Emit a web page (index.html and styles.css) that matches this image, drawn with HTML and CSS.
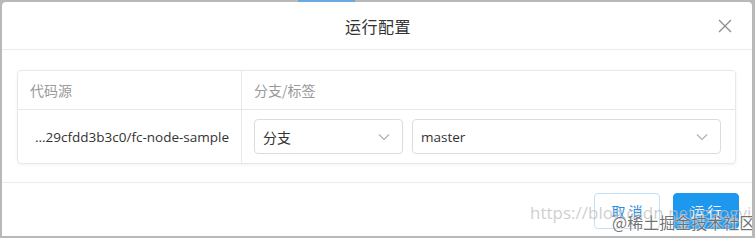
FILE: index.html
```html
<!DOCTYPE html>
<html lang="zh">
<head>
<meta charset="utf-8">
<title>运行配置</title>
<link rel="stylesheet" href="styles.css">
</head>
<body>
<div class="topstrip"><span class="tabline"></span></div>
<div class="modal">
  <div class="header">
    <div class="title">运行配置</div>
    <span class="close" aria-label="close">
      <svg width="14" height="14" viewBox="0 0 14 14"><path d="M1 1L13 13M13 1L1 13" stroke="#8c8c8c" stroke-width="1.3" fill="none"/></svg>
    </span>
  </div>
  <div class="body">
    <div class="table">
      <div class="row head">
        <div class="cell c1">代码源</div>
        <div class="cell c2">分支/标签</div>
      </div>
      <div class="row data">
        <div class="cell c1 src">...29cfdd3b3c0/fc-node-sample</div>
        <div class="cell c2 selects">
          <div class="select s1"><span>分支</span><svg class="chev" width="12" height="8" viewBox="0 0 12 8"><path d="M1 1.5L6 6.5L11 1.5" stroke="#b0b0b0" stroke-width="1.2" fill="none"/></svg></div>
          <div class="select s2"><span>master</span><svg class="chev" width="12" height="8" viewBox="0 0 12 8"><path d="M1 1.5L6 6.5L11 1.5" stroke="#b0b0b0" stroke-width="1.2" fill="none"/></svg></div>
        </div>
      </div>
    </div>
  </div>
  <div class="footer">
    <button class="btn cancel">取 消</button>
    <button class="btn primary">运 行</button>
  </div>
  <div class="wm">
    <span class="wm1">https://blog.csdn.net/gaogyike</span>
    <span class="wm2">@稀土掘金技术社区</span>
  </div>
</div>
</body>
</html>
```

FILE: styles.css
```css
html, body {
  margin: 0;
  padding: 0;
}
body {
  width: 755px;
  height: 238px;
  background: #b9b9b9;
  font-family: "Noto Sans CJK SC", "Open Sans", sans-serif;
  overflow: hidden;
  position: relative;
}
.topstrip {
  height: 2px;
  display: flex;
}
.tabline {
  margin-left: 298px;
  width: 57px;
  height: 2px;
  background: #6aa8e0;
}
.modal {
  position: relative;
  margin: 0 3px 2px 2px;
  height: 234px;
  background: #fff;
  border-radius: 4px 4px 0 0;
  overflow: hidden;
  display: flex;
  flex-direction: column;
}
.header {
  height: 47px;
  border-bottom: 1px solid #ececec;
  display: flex;
  align-items: center;
  justify-content: center;
  position: relative;
}
.title {
  font-size: 16px;
  color: #333;
  letter-spacing: 0.5px;
  margin-left: 2px;
}
.close {
  position: absolute;
  right: 20px;
  top: 17px;
  width: 14px;
  height: 14px;
  display: flex;
}
.body {
  padding: 20px 16px 18px 15px;
  border-bottom: 1px solid #ececec;
}
.table {
  border: 1px solid #e8e8e8;
  border-radius: 4px;
  box-shadow: 0 1px 3px rgba(0,0,0,0.06);
}
.row {
  display: flex;
}
.row.head {
  height: 38px;
  border-bottom: 1px solid #e8e8e8;
}
.row.data {
  height: 53px;
}
.cell {
  display: flex;
  align-items: center;
  box-sizing: border-box;
}
.c1 {
  width: 224px;
  border-right: 1px solid #e8e8e8;
  padding: 0 12px;
}
.c2 {
  flex: 1;
  padding: 0 14px 0 12px;
}
.head .cell {
  font-size: 14px;
  color: #999;
}
.src {
  justify-content: flex-end;
  font-family: "Open Sans", "Noto Sans CJK SC", sans-serif;
  font-size: 13.5px;
  color: #333;
  white-space: nowrap;
  overflow: hidden;
}
.selects {
  gap: 9px;
}
.select {
  height: 35px;
  box-sizing: border-box;
  border: 1px solid #dcdcdc;
  border-radius: 4px;
  display: flex;
  align-items: center;
  justify-content: space-between;
  padding: 0 12px 0 8px;
  font-size: 14px;
  color: #333;
}
.s1 {
  width: 149px;
}
.s2 {
  flex: 1;
}
.s2 span {
  font-family: "Open Sans", "Noto Sans CJK SC", sans-serif;
  font-size: 13.5px;
}
.footer {
  display: flex;
  justify-content: flex-end;
  gap: 13px;
  padding: 10px 13px 0 0;
}
.btn {
  height: 36px;
  width: 66px;
  border-radius: 4px;
  font-family: "Noto Sans CJK SC", sans-serif;
  font-size: 14px;
  cursor: pointer;
  padding: 0;
}
.cancel {
  background: #fff;
  border: 1px solid #bfe0f7;
  color: #2a8ee0;
}
.primary {
  background: #1e97ee;
  border: 1px solid #1e97ee;
  color: #fff;
}
.wm {
  position: absolute;
  left: 528px;
  top: 199px;
  width: 230px;
  height: 40px;
  pointer-events: none;
}
.wm1 {
  position: absolute;
  left: 0;
  top: 0;
  font-family: "Open Sans", sans-serif;
  font-size: 17px;
  color: rgba(190,190,190,0.75);
  white-space: nowrap;
}
.wm2 {
  position: absolute;
  left: 82px;
  top: 9px;
  font-size: 16px;
  color: rgba(90,90,90,0.85);
  text-shadow: 0 0 2px #fff, 0 0 2px #fff;
  white-space: nowrap;
}
```
